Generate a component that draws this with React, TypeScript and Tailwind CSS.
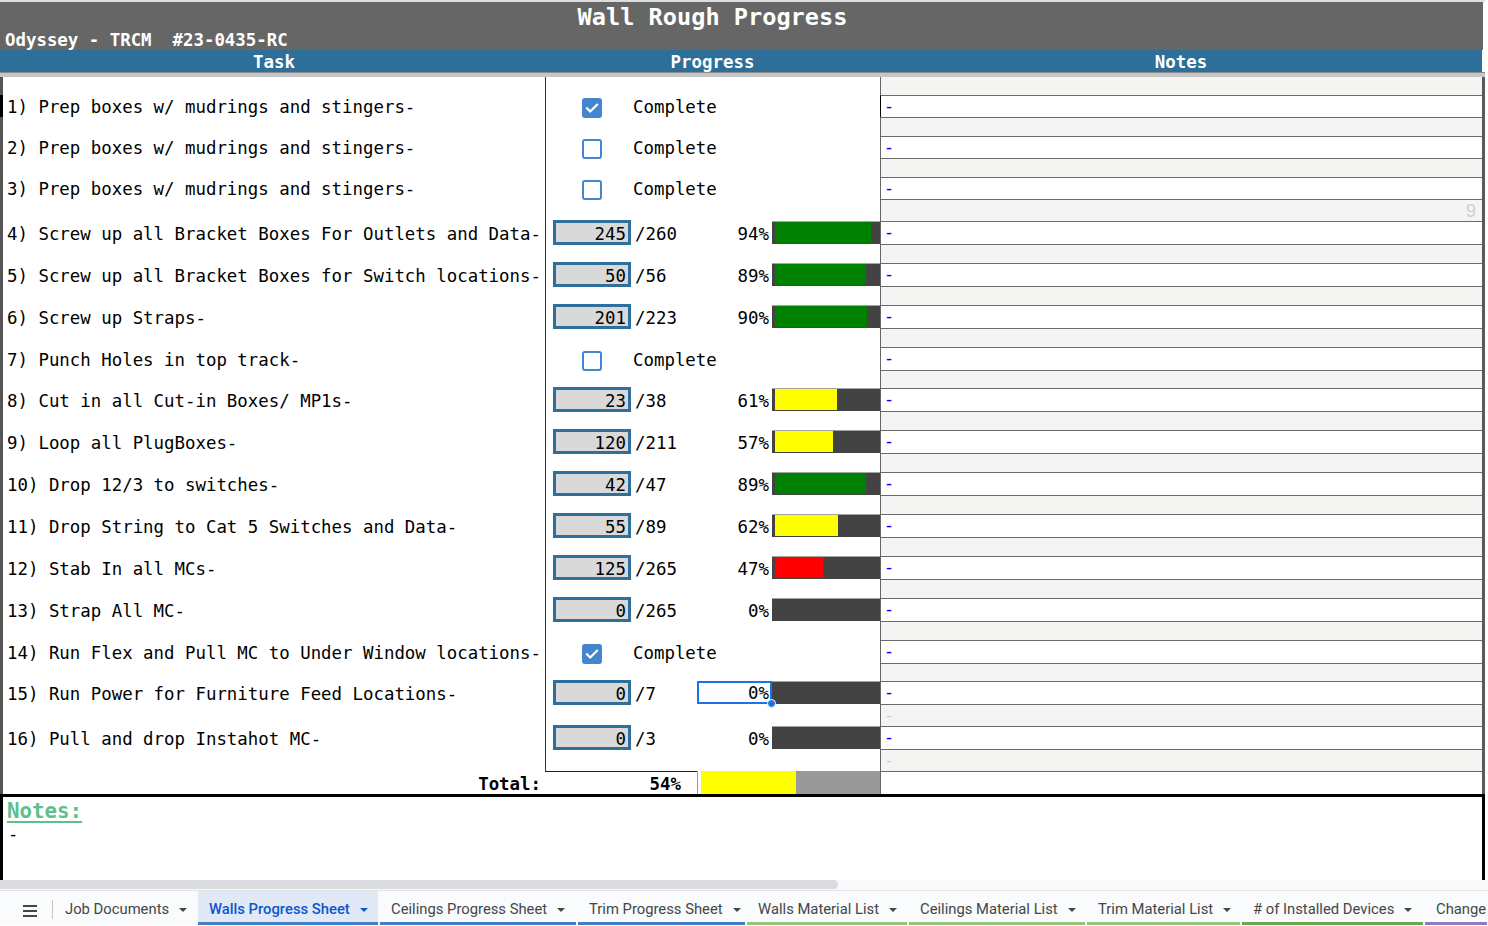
import React from "react";

type Row = {
  t: string;
  rowH: string;
  whiteH: string;
  kind: "check" | "count";
  checked?: boolean;
  done?: number;
  total?: number;
  pct?: number;
  color?: string;
  selected?: boolean;
  grayNote?: string;
  grayNoteRight?: string;
};

const G = "bg-[#008000]";
const Y = "bg-[#ffff00]";
const R = "bg-[#ff0000]";

const rows: Row[] = [
  { t: "1) Prep boxes w/ mudrings and stingers-", rowH: "h-[41px]", whiteH: "h-[22px]", kind: "check", checked: true },
  { t: "2) Prep boxes w/ mudrings and stingers-", rowH: "h-[41px]", whiteH: "h-[22px]", kind: "check", checked: false },
  { t: "3) Prep boxes w/ mudrings and stingers-", rowH: "h-[44px]", whiteH: "h-[22px]", kind: "check", checked: false, grayNoteRight: "9" },
  { t: "4) Screw up all Bracket Boxes For Outlets and Data-", rowH: "h-[42px]", whiteH: "h-[23px]", kind: "count", done: 245, total: 260, pct: 94, color: G },
  { t: "5) Screw up all Bracket Boxes for Switch locations-", rowH: "h-[42px]", whiteH: "h-[23px]", kind: "count", done: 50, total: 56, pct: 89, color: G },
  { t: "6) Screw up Straps-", rowH: "h-[42px]", whiteH: "h-[23px]", kind: "count", done: 201, total: 223, pct: 90, color: G },
  { t: "7) Punch Holes in top track-", rowH: "h-[41px]", whiteH: "h-[23px]", kind: "check", checked: false },
  { t: "8) Cut in all Cut-in Boxes/ MP1s-", rowH: "h-[42px]", whiteH: "h-[23px]", kind: "count", done: 23, total: 38, pct: 61, color: Y },
  { t: "9) Loop all PlugBoxes-", rowH: "h-[42px]", whiteH: "h-[23px]", kind: "count", done: 120, total: 211, pct: 57, color: Y },
  { t: "10) Drop 12/3 to switches-", rowH: "h-[42px]", whiteH: "h-[23px]", kind: "count", done: 42, total: 47, pct: 89, color: G },
  { t: "11) Drop String to Cat 5 Switches and Data-", rowH: "h-[42px]", whiteH: "h-[23px]", kind: "count", done: 55, total: 89, pct: 62, color: Y },
  { t: "12) Stab In all MCs-", rowH: "h-[42px]", whiteH: "h-[23px]", kind: "count", done: 125, total: 265, pct: 47, color: R },
  { t: "13) Strap All MC-", rowH: "h-[42px]", whiteH: "h-[23px]", kind: "count", done: 0, total: 265, pct: 0, color: G },
  { t: "14) Run Flex and Pull MC to Under Window locations-", rowH: "h-[41px]", whiteH: "h-[23px]", kind: "check", checked: true },
  { t: "15) Run Power for Furniture Feed Locations-", rowH: "h-[45px]", whiteH: "h-[23px]", kind: "count", done: 0, total: 7, pct: 0, color: G, selected: true, grayNote: "-" },
  { t: "16) Pull and drop Instahot MC-", rowH: "h-[45px]", whiteH: "h-[23px]", kind: "count", done: 0, total: 3, pct: 0, color: G, grayNote: "-" },
];

const tabs = [
  { name: "Job Documents", w: "w-[142px]", line: "bg-transparent" },
  { name: "Walls Progress Sheet", w: "w-[180px]", line: "bg-[#3f7fc4]", active: true },
  { name: "Ceilings Progress Sheet", w: "w-[196px]", line: "bg-[#3f7fc4]" },
  { name: "Trim Progress Sheet", w: "w-[167px]", line: "bg-[#3f7fc4]" },
  { name: "Walls Material List", w: "w-[160px]", line: "bg-[#93c47d]" },
  { name: "Ceilings Material List", w: "w-[176px]", line: "bg-[#93c47d]" },
  { name: "Trim Material List", w: "w-[153px]", line: "bg-[#93c47d]" },
  { name: "# of Installed Devices", w: "w-[181px]", line: "bg-[#6aa84f]" },
];

function Checkbox({ checked }: { checked: boolean }) {
  if (checked) {
    return (
      <div className="w-[20px] h-[20px] shrink-0 rounded-[3px] bg-[#4386cf] flex items-center justify-center">
        <svg width="16" height="16" viewBox="0 0 16 16">
          <path d="M3 8.3l3.2 3.2L13 4.7" fill="none" stroke="white" strokeWidth="2.2" strokeLinecap="square" />
        </svg>
      </div>
    );
  }
  return <div className="w-[20px] h-[20px] shrink-0 rounded-[3px] border-2 border-[#4386cf] bg-white" />;
}

function Arrow({ color }: { color: string }) {
  return (
    <svg width="8" height="4" viewBox="0 0 8 4" className="shrink-0">
      <path d="M0 0h8L4 4z" fill={color} />
    </svg>
  );
}

function TaskRow({ r, first }: { r: Row; first: boolean }) {
  return (
    <div className={`flex ${r.rowH}`}>
      <div className="w-[3px] h-full flex flex-col">
        <div className={`${r.whiteH} ${first ? "bg-black" : "bg-[#555]"}`} />
        <div className="flex-1 bg-[#555]" />
      </div>
      <div className="w-[542px] h-full">
        <div className={`${r.whiteH} pt-[4px] flex items-center pl-[4px] whitespace-nowrap text-black`}>{r.t}</div>
      </div>
      <div className="w-[335px] h-full border-l border-[#333] bg-white">
        {r.kind === "check" ? (
          <div className={`${r.whiteH} pt-[4px] flex items-center`}>
            <div className="w-[36px] shrink-0" />
            <Checkbox checked={!!r.checked} />
            <div className="w-[31px] shrink-0" />
            <span>Complete</span>
          </div>
        ) : (
          <div className={`${r.whiteH} flex items-center`}>
            <div className="w-[7px] shrink-0" />
            <div className="w-[78px] h-[25px] shrink-0 border-[3px] border-[#2e6f9b] bg-[#d9d9d9] flex items-center justify-end pr-[2px] pt-[5px]">
              {r.done}
            </div>
            <div className="w-[4px] shrink-0" />
            <div className="w-[62px] shrink-0 pt-[4px]">/{r.total}</div>
            {r.selected ? (
              <div className="relative w-[75px] h-[23px] shrink-0 border-2 border-[#1a73e8] bg-white flex items-center justify-end pr-[1px] pt-[3px]">
                {r.pct}%
                <div className="absolute right-[-6px] bottom-[-6px] w-[9px] h-[9px] rounded-full bg-[#1a73e8] border border-white" />
              </div>
            ) : (
              <div className="w-[75px] h-[23px] shrink-0 flex items-center justify-end pr-[3px] pt-[4px]">{r.pct}%</div>
            )}
            <div className="w-[108px] h-[23px] shrink-0 bg-[#434343] border-t border-[#a3a3a3] pl-[3px] pb-[1px] flex">
              <div className={`h-full ${r.color}`} style={{ width: `${Math.round(((r.pct || 0) * 102) / 100)}px` }} />
            </div>
          </div>
        )}
      </div>
      <div className="w-[602px] h-full border-l border-[#666] flex flex-col">
        <div className={`${r.whiteH} border-t border-[#6b6b6b] bg-white flex items-center pl-[5px] text-[18px] font-['Liberation_Sans',sans-serif] text-[#0000ff] ${first ? "border-l border-l-black -ml-px" : ""}`}>
          -
        </div>
        <div className="flex-1 border-t border-[#6b6b6b] bg-[#f4f4f2] flex items-center justify-between pl-[5px] pr-[6px] text-[#cfcfcf] font-['Liberation_Sans',sans-serif]">
          <span className="text-[18px]">{r.grayNote || ""}</span>
          <span className="text-[18px]">{r.grayNoteRight || ""}</span>
        </div>
      </div>
      <div className="w-[3px] h-full bg-[#5a5a5a]" />
    </div>
  );
}

export default function App() {
  return (
    <div className="w-[1488px] h-[926px] bg-white overflow-hidden font-['DejaVu_Sans_Mono','Liberation_Mono',monospace] text-[17.4px] leading-none text-black">
      {/* top grid strip */}
      <div className="h-[2px] bg-[#dedede] w-[1485px]" />
      {/* gray header */}
      <div className="w-[1483px] h-[48px] bg-[#666666] flex text-white font-bold">
        <div className="w-[545px] h-full flex items-end pb-[1px] pl-[5px] whitespace-pre">Odyssey - TRCM  #23-0435-RC</div>
        <div className="w-[335px] h-full flex justify-center pt-[4px] text-[23.6px] whitespace-nowrap">Wall Rough Progress</div>
        <div className="flex-1" />
      </div>
      {/* blue band */}
      <div className="w-[1482px] h-[22px] bg-[#2d6f99] flex text-white font-bold pt-[3px]">
        <div className="w-[545px] flex items-center justify-center pl-[3px]">Task</div>
        <div className="w-[335px] flex items-center justify-center">Progress</div>
        <div className="flex-1 flex items-center justify-center">Notes</div>
      </div>
      <div className="w-[1485px] h-[1px] bg-[#8a8a8a]" />
      <div className="w-[1485px] h-[4px] bg-[#c6c6c6]" />

      {/* spacer row */}
      <div className="flex h-[18px]">
        <div className="w-[3px] bg-[#555]" />
        <div className="w-[542px]" />
        <div className="w-[335px] border-l border-[#333]" />
        <div className="w-[602px] border-l border-[#666] bg-[#f4f4f2]" />
        <div className="w-[3px] bg-[#5a5a5a]" />
      </div>

      {rows.map((r, i) => (
        <TaskRow key={i} r={r} first={i === 0} />
      ))}

      {/* total row */}
      <div className="flex h-[23px]">
        <div className="w-[3px] bg-[#555]" />
        <div className="w-[542px] flex items-center justify-end pr-[4px] pt-[4px] font-bold">Total:</div>
        <div className="w-[152px] border-t border-[#222] flex items-center justify-end pr-[16px] pt-[4px] font-bold">54%</div>
        <div className="w-[183px] flex border-l border-[#9a9a9a]">
          <div className="w-[3px] bg-white" />
          <div className="w-[95px] bg-[#ffff00]" />
          <div className="flex-1 bg-[#999999]" />
        </div>
        <div className="w-[602px] border-l border-t border-[#666] bg-white" />
        <div className="w-[3px] bg-[#5a5a5a]" />
      </div>
      <div className="w-[1485px] h-[3px] bg-black" />

      {/* notes box */}
      <div className="w-[1485px] h-[83px] border-x-[3px] border-black bg-white pl-[4px] pt-[4px] flex flex-col">
        <span className="text-[20.8px] font-bold text-[#5cbf8c] underline underline-offset-[3px] decoration-[1.5px]">Notes:</span>
        <span className="mt-[4px] pl-[1px] text-[17px]">-</span>
      </div>

      {/* scrollbar */}
      <div className="h-[11px] w-[1488px] bg-[#f8f9fa] border-b border-[#e3e3e3] flex items-start">
        <div className="w-[838px] h-[9px] bg-[#dadce0] rounded-r-full" />
      </div>

      {/* tab bar */}
      <div className="h-[34px] w-[1488px] bg-[#f9fbfd] flex items-stretch font-['Roboto',sans-serif] text-[14.8px] leading-none text-[#444746] whitespace-nowrap overflow-hidden">
        <div className="w-[52px] shrink-0 flex items-center pl-[23px] pt-[5px]">
          <div className="flex flex-col gap-[3px]">
            <div className="w-[14px] h-[2px] bg-[#444746]" />
            <div className="w-[14px] h-[2px] bg-[#444746]" />
            <div className="w-[14px] h-[2px] bg-[#444746]" />
          </div>
        </div>
        <div className="w-[1px] shrink-0 mt-[9px] mb-[6px] bg-[#c7c7c7]" />
        <div className="w-[1px] shrink-0" />
        <div className="flex gap-[2px] shrink-0">
          {tabs.map((t) => (
            <div key={t.name} className={`${t.w} shrink-0 flex flex-col ${t.active ? "bg-[#e1e9f7]" : ""}`}>
              <div className={`flex-1 flex items-center pl-[11px] pt-[6px] gap-[10px] ${t.active ? "text-[#0b57d0] font-medium" : ""}`}>
                <span>{t.name}</span>
                <Arrow color={t.active ? "#0b57d0" : "#444746"} />
              </div>
              <div className={`h-[3px] ${t.line}`} />
            </div>
          ))}
          <div className="w-[62px] shrink-0 flex flex-col">
            <div className="flex-1 flex items-center pl-[11px] pt-[6px]">
              <span>Change</span>
            </div>
            <div className="h-[3px] bg-[#8e7cc3]" />
          </div>
        </div>
      </div>
    </div>
  );
}
